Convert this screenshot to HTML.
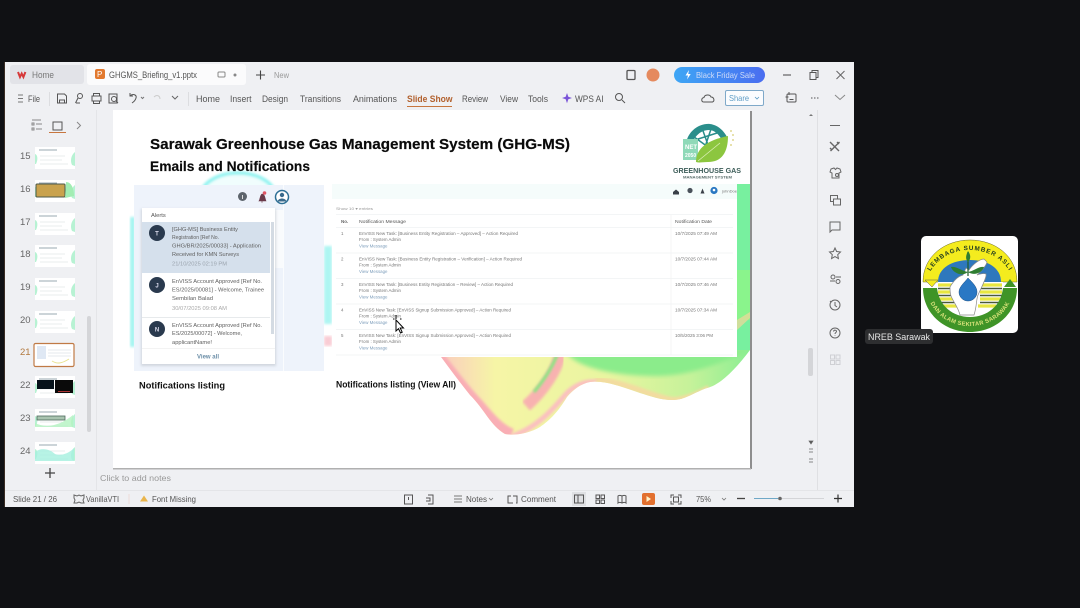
<!DOCTYPE html>
<html><head><meta charset="utf-8"><style>
html,body{margin:0;padding:0;background:#101114;width:1080px;height:608px;overflow:hidden}
svg{display:block}
#root{filter:blur(.35px)}
text{font-family:"Liberation Sans",sans-serif}
.ui{font-size:9px;fill:#555}
.tb{font-size:4.4px;fill:#777}
.ln{font-size:4.4px;fill:#7f9fbc}
.n{font-size:5.2px;fill:#5f5f5f}
.i{fill:none;stroke:#555;stroke-width:1}
.num{font-size:9.5px;fill:#666}
</style></head><body>
<svg id="root" width="1080" height="608" viewBox="0 0 1080 608" xmlns="http://www.w3.org/2000/svg">
<defs>
<filter id="b3"><feGaussianBlur stdDeviation="3"/></filter>
<filter id="b1"><feGaussianBlur stdDeviation="1.2"/></filter>
<filter id="b2"><feGaussianBlur stdDeviation="2"/></filter>
<linearGradient id="wave" x1="0" y1="0" x2="1" y2="0">
<stop offset="0" stop-color="#fbc4c4"/><stop offset=".2" stop-color="#f6f5a6"/><stop offset=".55" stop-color="#e9f5a0"/><stop offset=".8" stop-color="#c6f29a"/><stop offset="1" stop-color="#86ee92"/>
</linearGradient>
<linearGradient id="btn" x1="0" y1="0" x2="1" y2="0"><stop offset="0" stop-color="#3ea6f5"/><stop offset="1" stop-color="#4a6df0"/></linearGradient>
<path id="topArc" d="M926 288 A44 38 0 0 1 1014 288"/>
<path id="botArc" d="M927 288 A43 38 0 0 0 1013 288"/>
<clipPath id="waveClip"><path d="M436 350H750C735 370 720 385 707 388 695 392 685 400 673 400 660 400 650 396 640 393 625 388 605 380 590 382 580 384 573 390 567 397 558 412 550 420 540 427 530 433 515 436 505 434 490 425 485 410 470 395 458 380 447 365 436 350Z"/></clipPath>
<clipPath id="tile"><rect x="921" y="236" width="97" height="97" rx="5"/></clipPath>
<g id="th">
<rect width="40" height="22" fill="#fff"/>
<rect x="4" y="2.500" width="18" height="1" fill="#9aa8b0"/>
<path d="M0 7c3 1 3 6 1 10H0zM40 5c-4 3-5 9-3 13l3 1z" fill="#b7f2d3"/>
<path d="M5 9h25M5 13h22M5 17h28" stroke="#e1e6e9" stroke-width=".7"/>
</g>
</defs>

<rect width="1080" height="608" fill="#101114"/>
<rect x="4" y="62" width="1" height="445" fill="#3a2d24"/>
<rect x="5" y="62" width="849" height="445" fill="#eff0f3"/>

<!-- tabs -->
<rect x="10" y="65" width="74" height="19" rx="3" fill="#e2e3e8"/>
<rect x="87" y="64" width="159" height="21" rx="3" fill="#fbfbfc"/>
<path d="M18 72l2 5 1.700-3.500 1.700 3.500 2-5" fill="none" stroke="#d6393a" stroke-width="2"/>
<text x="32" y="78" class="ui" textLength="22" lengthAdjust="spacingAndGlyphs" style="fill:#777">Home</text>
<rect x="95" y="69" width="10" height="10" rx="2" fill="#e2792f"/>
<text x="97" y="77" font-size="8" fill="#fff">P</text>
<text x="109" y="78" class="ui" textLength="88" lengthAdjust="spacingAndGlyphs">GHGMS_Briefing_v1.pptx</text>
<rect x="218" y="72" width="7" height="5" rx="1" class="i" style="stroke:#888"/>
<circle cx="235" cy="75" r="1.500" fill="#888"/>
<path d="M256 75h9M260.500 70.500v9" stroke="#444" stroke-width="1.100"/>
<text x="274" y="78" font-size="8" fill="#999" textLength="15" lengthAdjust="spacingAndGlyphs">New</text>
<rect x="627" y="70.500" width="8" height="9" rx="1" class="i" style="stroke:#555;stroke-width:1.300"/>
<circle cx="653" cy="75" r="6.500" fill="#e58a5e"/>
<rect x="674" y="67" width="91" height="16" rx="8" fill="url(#btn)"/>
<path d="M689 70l-3.500 5.500h2.500l-1 4 3.700-5.500h-2.500z" fill="#fff"/>
<text x="696" y="78" font-size="8.500" fill="#cfdcf8" textLength="59" lengthAdjust="spacingAndGlyphs">Black Friday Sale</text>
<path d="M783 75h8" stroke="#444"/>
<rect x="810" y="72.500" width="6" height="7" class="i"/><path d="M812 72.500v-2h6v7h-2" class="i"/>
<path d="M836.500 71l8 8M844.500 71l-8 8" stroke="#666"/>

<!-- ribbon -->
<path d="M18 95h5M18 98.500h5M18 102h5" stroke="#777"/>
<text x="28" y="102" class="ui" textLength="12" lengthAdjust="spacingAndGlyphs">File</text>
<rect x="49" y="92" width="1" height="14" fill="#dcdde0"/>
<path d="M57.500 94h7l2 2v7h-9zM59.500 103v-3h5v3" class="i"/>
<circle cx="80" cy="96" r="2.500" class="i"/><path d="M78 98l-2.500 5M76 103h4" class="i"/>
<rect x="92" y="96" width="9" height="5" class="i"/><path d="M93.500 96v-2.500h6v2.500M93.500 101v2.500h6V101" class="i"/>
<rect x="109" y="94" width="8" height="9" class="i"/><circle cx="114" cy="99" r="2.500" class="i"/><path d="M116 101l2 2" class="i"/>
<path d="M130 96c3-3 7-1 6 2-.5 2-2.500 4-4 5M130 93v3h3" class="i"/>
<path d="M141 97l1.500 1.500 1.500-1.500" class="i" style="stroke:#777"/>
<path d="M154 97c3-3 6-1 6 2" class="i" style="stroke:#ccc"/>
<path d="M172 96l3 3 3-3" class="i" style="stroke:#666"/>
<rect x="188" y="92" width="1" height="14" fill="#dcdde0"/>
<g class="ui">
<text x="196" y="102" textLength="24" lengthAdjust="spacingAndGlyphs">Home</text>
<text x="230" y="102" textLength="21.500" lengthAdjust="spacingAndGlyphs">Insert</text>
<text x="262" y="102" textLength="26" lengthAdjust="spacingAndGlyphs">Design</text>
<text x="300" y="102" textLength="41" lengthAdjust="spacingAndGlyphs">Transitions</text>
<text x="353" y="102" textLength="44" lengthAdjust="spacingAndGlyphs">Animations</text>
<text x="462" y="102" textLength="26" lengthAdjust="spacingAndGlyphs">Review</text>
<text x="500" y="102" textLength="18" lengthAdjust="spacingAndGlyphs">View</text>
<text x="528" y="102" textLength="20" lengthAdjust="spacingAndGlyphs">Tools</text>
<text x="575" y="102" textLength="28.500" lengthAdjust="spacingAndGlyphs">WPS AI</text>
</g>
<text x="407" y="102" font-size="9" font-weight="bold" fill="#b2612e" textLength="45.500" lengthAdjust="spacingAndGlyphs">Slide Show</text>
<rect x="407" y="106" width="45" height="1" fill="#c7763e"/>
<path d="M567 93l1.300 3.700 3.700 1.300-3.700 1.300-1.300 4-1.300-4-3.700-1.300 3.700-1.300z" fill="#7a54d8"/>
<circle cx="619" cy="97" r="3.500" class="i"/><path d="M622 100l3 3" class="i"/>
<path d="M704 102c-3 0-3-4 0-4.500 .5-3 6-3.500 7-.5 3 0 4 4 1.500 5z" class="i"/>
<rect x="725.500" y="90.500" width="38" height="15" rx="1.500" fill="#fbfcfe" stroke="#7fa9c9"/>
<text x="729" y="101" font-size="8.500" fill="#5f9dc6" textLength="20" lengthAdjust="spacingAndGlyphs">Share</text>
<path d="M755 97l2 2 2-2" class="i" style="stroke:#5b9ac3;stroke-width:.8"/>
<rect x="787" y="94" width="9" height="8" rx="1" class="i"/><path d="M789 92v3M785.500 97h3M789.500 99.500h4" class="i"/>
<path d="M811 98h1.500M814 98h1.500M817 98h1.500" stroke="#555"/>
<path d="M835 95l5 4.500 5-4.500" class="i" style="stroke:#888"/>

<!-- left pane -->
<path d="M32 123h2v2h-2zM32 128h2v2h-2zM36 124h6M36 129h6M32 120h9" class="i" style="stroke:#888"/>
<rect x="53" y="122" width="9" height="8" class="i" style="stroke:#555"/>
<rect x="49" y="132" width="17" height="1" fill="#c7763e"/>
<path d="M77 122l3.500 3.500-3.500 3.500" class="i" style="stroke:#888"/>
<rect x="96" y="110" width="1" height="380" fill="#e4e5e8"/>

<g class="num">
<text x="20" y="159">15</text><text x="20" y="192">16</text><text x="20" y="225">17</text><text x="20" y="257">18</text><text x="20" y="290">19</text><text x="20" y="323">20</text>
<text x="20" y="355" style="fill:#b2793f">21</text>
<text x="20" y="388">22</text><text x="20" y="421">23</text><text x="20" y="454">24</text>
</g>
<g>
<use href="#th" x="35" y="147"/>
<use href="#th" x="35" y="180"/><rect x="36" y="184" width="29" height="13" rx="1" fill="#c9a24d" stroke="#4d5a4a"/><path d="M66 182c6 0 8 8 8 14l-9 2z" fill="#a2edb3"/>
<use href="#th" x="35" y="213"/>
<use href="#th" x="35" y="245"/>
<use href="#th" x="35" y="278"/>
<use href="#th" x="35" y="311"/>
<rect x="34" y="343.500" width="40" height="23" rx="1.500" fill="#fff" stroke="#c07a45" stroke-width="1.200"/>
<rect x="37" y="346" width="9" height="13" fill="#dfe8f4"/><path d="M48 350h23M48 353h23M48 356h23" stroke="#dde2e6" stroke-width=".8"/><path d="M52 361c5 3 9 3 17-2" stroke="#e8e28f" fill="none"/>
<use href="#th" x="35" y="376"/><rect x="37" y="380" width="17" height="9" fill="#06121a"/><rect x="55" y="380" width="18" height="13" fill="#0a0a0a"/><rect x="58" y="391" width="12" height="1" fill="#a33"/>
<use href="#th" x="35" y="409"/><rect x="37" y="416" width="28" height="4" fill="#a9c4b0" stroke="#4d6a5c" stroke-width=".8"/><path d="M35 423c12 6 26 2 38-8v12H35z" fill="#b3f2c0" opacity=".8"/>
<use href="#th" x="35" y="442"/><path d="M35 452c6-5 15-3 20 2 6 2 13 0 19-6v13H35z" fill="#a5f0de" opacity=".8"/>
</g>
<rect x="87" y="316" width="4" height="116" rx="2" fill="#d4d5d8"/>
<path d="M45 473h10M50 468v10" stroke="#444" stroke-width="1.300"/>

<!-- slide -->
<rect x="750" y="111" width="2" height="358" fill="#8e8e8e"/>
<rect x="113" y="468" width="638" height="1.500" fill="#b0b0b0"/>
<rect x="113" y="110" width="637" height="358" fill="#fff"/>

<!-- glow waves -->
<svg x="113" y="110" width="637" height="358" viewBox="113 110 637 358">
<ellipse cx="238" cy="196" rx="37" ry="23" fill="#f0fdfd" stroke="#8df3f0" stroke-width="3.500" filter="url(#b1)"/>
<rect x="130" y="217" width="5" height="130" fill="#a5f4f1" filter="url(#b1)"/>
<rect x="324" y="246" width="8" height="78" fill="#aef5f2" filter="url(#b1)"/>
<rect x="324" y="336" width="8" height="10" fill="#f9ccd4" filter="url(#b1)"/>
<rect x="737" y="184" width="13" height="166" fill="#78f09f"/>
<path d="M737 270h13v50h-13z" fill="#8ef587" opacity=".8"/>
<path d="M737 320l13-8v6l-13 12z" fill="#f3d59a" opacity=".7"/>
<g clip-path="url(#waveClip)">
<rect x="430" y="345" width="325" height="95" fill="url(#wave)"/>
<path d="M432 348c18 22 32 42 46 56 12 14 22 26 34 30" fill="none" stroke="#f9aeb5" stroke-width="11" filter="url(#b1)"/>
<path d="M560 352c-2 18-18 40-34 54" fill="none" stroke="#f8b2b0" stroke-width="12" filter="url(#b1)"/>
<path d="M558 352c-5 15-14 28-24 40" fill="none" stroke="#84e97f" stroke-width="3" filter="url(#b1)"/>
<path d="M566 352c10 16 50 24 90 24 30 0 60-10 94-26z" fill="#8bec8b" filter="url(#b2)"/>
<path d="M595 380c25 0 60 18 78 20 14 0 28-8 36-12" fill="none" stroke="#f3dba0" stroke-width="6" filter="url(#b1)"/>
<path d="M512 436c25-8 42-28 54-42 8-8 18-13 30-12" fill="none" stroke="#fbc0c0" stroke-width="5" filter="url(#b1)"/>
</g>
</svg>

<text x="150" y="149" font-size="15" font-weight="bold" fill="#0a0a0a" stroke="#0a0a0a" stroke-width=".2" textLength="420" lengthAdjust="spacingAndGlyphs">Sarawak Greenhouse Gas Management System (GHG-MS)</text>
<text x="150" y="171" font-size="13.500" font-weight="bold" fill="#0a0a0a" stroke="#0a0a0a" stroke-width=".15" textLength="160" lengthAdjust="spacingAndGlyphs">Emails and Notifications</text>

<!-- GHG logo -->
<g>
<path d="M686 148c-1-15 12-25 24-24 8 1 14 7 17 13l-5 3c-3-5-7-10-13-10-9 0-17 8-17 18z" fill="#2a8e8b"/>
<path d="M695 140l22-7M702 128l6 17M690 134l18 13M712 126l-8 24" stroke="#2a8e8b" stroke-width="1.500"/>
<rect x="683" y="139" width="15" height="21" fill="#8fd9b8"/>
<text x="685" y="149" font-size="6" font-weight="bold" fill="#fff">NET</text>
<text x="685" y="157" font-size="5" font-weight="bold" fill="#fff">2050</text>
<path d="M696 162c0-14 12-22 32-26 0 16-6 26-20 26-5 0-9 1-12 0z" fill="#8cc63f"/>
<path d="M698 161l22-18" stroke="#dcefb8" stroke-width=".8"/>
<circle cx="731" cy="131" r=".9" fill="#d6cb72"/><circle cx="733" cy="135" r=".9" fill="#d6cb72"/><circle cx="733" cy="140" r=".9" fill="#d6cb72"/><circle cx="731" cy="145" r=".9" fill="#d6cb72"/>
<text x="673" y="173" font-size="7" font-weight="bold" fill="#3c5c58" textLength="68" lengthAdjust="spacingAndGlyphs">GREENHOUSE GAS</text>
<text x="683" y="178.500" font-size="3.800" font-weight="bold" fill="#5b6f6c" textLength="49" lengthAdjust="spacingAndGlyphs">MANAGEMENT SYSTEM</text>
</g>

<!-- notifications panel -->
<rect x="134" y="185" width="190" height="186" fill="#eef3fb"/>
<rect x="275" y="210" width="8" height="58" fill="#f9fbfd"/>
<rect x="283" y="185" width="1" height="186" fill="#fff" opacity=".7"/>
<rect x="141" y="209" width="135" height="157" fill="#b8bec6" filter="url(#b1)" opacity=".55"/>
<rect x="142" y="208" width="133" height="156" fill="#fff"/>
<rect x="142" y="222" width="128" height="51" fill="#d5e0ec"/>
<rect x="271" y="222" width="3" height="112" fill="#d4dbe3"/>
<rect x="142" y="317" width="128" height=".7" fill="#dde0e3"/>
<rect x="142" y="348" width="133" height=".7" fill="#eee"/>
<circle cx="242.500" cy="196.500" r="4.500" fill="#5d646c"/><rect x="242" y="195" width="1" height="4" fill="#ddd"/>
<path d="M259 201c1-1 1-6 3-7 3 0 3 5 4 7zM261 202h2" fill="#6a3a4a" stroke="#6a3a4a" stroke-width=".6"/><circle cx="264.500" cy="193" r="1.800" fill="#e05565"/>
<circle cx="282" cy="197" r="6.500" fill="#fff" stroke="#2d6f95" stroke-width="1.500"/><circle cx="282" cy="195" r="2.200" fill="#3a6a8c"/><path d="M277.500 201.500c1-4 8-4 9 0z" fill="#3a6a8c"/>
<text x="151" y="217" font-size="5.800" fill="#555">Alerts</text>
<circle cx="157" cy="233" r="8" fill="#2a3a4e"/><text x="157" y="235.500" font-size="6" font-weight="bold" fill="#dde" text-anchor="middle">T</text>
<circle cx="157" cy="285" r="8" fill="#2a3a4e"/><text x="157" y="287.500" font-size="6" font-weight="bold" fill="#dde" text-anchor="middle">J</text>
<circle cx="157" cy="329" r="8" fill="#2a3a4e"/><text x="157" y="331.500" font-size="6" font-weight="bold" fill="#dde" text-anchor="middle">N</text>
<g class="n">
<text x="172" y="231" textLength="66" lengthAdjust="spacingAndGlyphs">[GHG-MS] Business Entity</text>
<text x="172" y="239" textLength="47" lengthAdjust="spacingAndGlyphs">Registration [Ref No.</text>
<text x="172" y="247.500" textLength="89" lengthAdjust="spacingAndGlyphs">GHG/BR/2025/00033] - Application</text>
<text x="172" y="256" textLength="67" lengthAdjust="spacingAndGlyphs">Received for KMN Surveys</text>
<text x="172" y="265.500" style="fill:#9aa3ad" textLength="55" lengthAdjust="spacingAndGlyphs">21/10/2025 02:19 PM</text>
<text x="172" y="283" textLength="90" lengthAdjust="spacingAndGlyphs">EnVISS Account Approved [Ref No.</text>
<text x="172" y="291.500" textLength="92" lengthAdjust="spacingAndGlyphs">ES/2025/00081] - Welcome, Trainee</text>
<text x="172" y="300" textLength="41" lengthAdjust="spacingAndGlyphs">Sembilan Balad</text>
<text x="172" y="310" style="fill:#aaa" textLength="55" lengthAdjust="spacingAndGlyphs">30/07/2025 09:08 AM</text>
<text x="172" y="327" textLength="90" lengthAdjust="spacingAndGlyphs">EnVISS Account Approved [Ref No.</text>
<text x="172" y="335" textLength="70" lengthAdjust="spacingAndGlyphs">ES/2025/00072] - Welcome,</text>
<text x="172" y="344" textLength="40" lengthAdjust="spacingAndGlyphs">applicantName!</text>
<text x="197" y="358.500" font-size="6" font-weight="bold" style="fill:#6c8fa8" textLength="22" lengthAdjust="spacingAndGlyphs">View all</text>
</g>
<text x="139" y="388.500" font-size="9" font-weight="bold" fill="#111" textLength="86" lengthAdjust="spacingAndGlyphs">Notifications listing</text>
<text x="336" y="387.500" font-size="9" font-weight="bold" fill="#111" textLength="120" lengthAdjust="spacingAndGlyphs">Notifications listing (View All)</text>

<!-- table panel -->
<rect x="332" y="184" width="405" height="173" fill="#fff"/>
<rect x="332" y="184" width="405" height="15" fill="#f5fcfb"/>
<path d="M673 192l3-2.500 3 2.500v2.500h-6z" fill="#3a4048"/>
<circle cx="690" cy="190.500" r="2.600" fill="#4a525a"/>
<path d="M700.500 193.500l2-5 2 5z" fill="#3a4048"/>
<circle cx="714" cy="190.500" r="3.600" fill="#2a78c2"/><circle cx="714" cy="190" r="1.300" fill="#fff"/>
<text x="722" y="192.500" font-size="4" fill="#777" textLength="15" lengthAdjust="spacingAndGlyphs">johnDoe</text>
<text x="336" y="210" font-size="3.800" fill="#999" textLength="37" lengthAdjust="spacingAndGlyphs">Show  10  ▾  entries</text>
<g stroke="#f0f2f3" stroke-width=".7">
<path d="M336 214.500H733M336 227.500H733M336 253H733M336 278.500H733M336 304H733M336 329.500H733M336 355H733"/>
<path d="M671 215V355"/>
</g>
<g>
<text x="341" y="223" font-size="4.500" font-weight="bold" fill="#666">No.</text>
<text x="359" y="223" font-size="4.500" fill="#555" textLength="47" lengthAdjust="spacingAndGlyphs">Notification Message</text>
<text x="675" y="223" font-size="4.500" fill="#555" textLength="37" lengthAdjust="spacingAndGlyphs">Notification Date</text>
<g class="tb">
<text x="341" y="235">1</text><text x="341" y="260.500">2</text><text x="341" y="286">3</text><text x="341" y="311.500">4</text><text x="341" y="337">5</text>
<text x="359" y="235" textLength="159" lengthAdjust="spacingAndGlyphs">EnVISS New Task: [Business Entity Registration – Approved] – Action Required</text>
<text x="359" y="241">From : System Admin</text>
<text x="359" y="260.500" textLength="163" lengthAdjust="spacingAndGlyphs">EnVISS New Task: [Business Entity Registration – Verification] – Action Required</text>
<text x="359" y="266.500">From : System Admin</text>
<text x="359" y="286" textLength="154" lengthAdjust="spacingAndGlyphs">EnVISS New Task: [Business Entity Registration – Review] – Action Required</text>
<text x="359" y="292">From : System Admin</text>
<text x="359" y="311.500" textLength="152" lengthAdjust="spacingAndGlyphs">EnVISS New Task: [EnVISS Signup Submission Approved] – Action Required</text>
<text x="359" y="317.500">From : System Admin</text>
<text x="359" y="337" textLength="152" lengthAdjust="spacingAndGlyphs">EnVISS New Task: [EnVISS Signup Submission Approved] – Action Required</text>
<text x="359" y="343">From : System Admin</text>
<text x="675" y="235" textLength="42" lengthAdjust="spacingAndGlyphs">10/7/2025 07:49 AM</text>
<text x="675" y="260.500" textLength="42" lengthAdjust="spacingAndGlyphs">10/7/2025 07:44 AM</text>
<text x="675" y="286" textLength="42" lengthAdjust="spacingAndGlyphs">10/7/2025 07:46 AM</text>
<text x="675" y="311.500" textLength="42" lengthAdjust="spacingAndGlyphs">10/7/2025 07:34 AM</text>
<text x="675" y="337" textLength="38" lengthAdjust="spacingAndGlyphs">10/5/2025 3:06 PM</text>
</g>
<g class="ln">
<text x="359" y="247.500">View Message</text><text x="359" y="273">View Message</text><text x="359" y="298.500">View Message</text><text x="359" y="324">View Message</text><text x="359" y="349.500">View Message</text>
</g>
</g>
<!-- cursor -->
<path d="M396 320l0 11 2.500-2.300 2 4.300 1.700-.8-2-4.200h3.300z" fill="#fff" stroke="#000" stroke-width="1"/>
<path d="M396 315v4M393 319h1.500M400 319h1.500" stroke="#000" stroke-width="1"/>

<!-- scrollbar + right rail -->
<rect x="817" y="110" width="1" height="381" fill="#dfe0e3"/>
<path d="M811 114l-2 2h4z" fill="#777"/>
<rect x="808" y="348" width="5" height="28" rx="2" fill="#d4d5d8"/>
<path d="M809 441h4l-2 3zM809 449h4M809 452h4M809 459h4M809 462h4" fill="#555" stroke="#666" stroke-width=".7"/>
<g class="i" style="stroke:#666">
<path d="M830 125.500h10" />
<path d="M830 142l9 9M839.500 142l-9 9M830 148l2 2M837 142l2 2" stroke-width="1.400"/>
<path d="M831 169l3-1 1.500 1.500L837 168l3 1 1 3-2 1v5h-7v-5l-2-1z"/><circle cx="837" cy="175" r="1.500"/>
<rect x="830.500" y="195.500" width="7" height="6"/><rect x="833.500" y="199" width="7" height="6" fill="#eff0f3"/>
<path d="M830 222h10v8h-8l-2 2z"/>
<path d="M835 248l1.600 3.500 3.900.5-2.800 2.700.7 3.800-3.400-1.900-3.400 1.900.7-3.800-2.800-2.700 3.900-.5z"/>
<path d="M836 277h5M830 281h5"/><circle cx="833" cy="277" r="2"/><circle cx="838" cy="281.500" r="2"/>
<circle cx="835" cy="305" r="5"/><path d="M835 302v3.500l2 1.500M830 301l1 1"/>
<circle cx="835" cy="333" r="5"/><path d="M833.500 331.500c.5-2 3-1.500 3 0 0 1-1.500 1-1.500 2.500M835 335.500v.5"/>
</g>
<g class="i" style="stroke:#cfd0d4"><rect x="830.500" y="355" width="4" height="4"/><rect x="836" y="355" width="4" height="4"/><rect x="830.500" y="360.500" width="4" height="4"/><rect x="836" y="360.500" width="4" height="4"/></g>

<!-- notes -->
<text x="100" y="481" font-size="8.500" fill="#999" textLength="71" lengthAdjust="spacingAndGlyphs">Click to add notes</text>
<rect x="5" y="490" width="849" height="1" fill="#e4e5e8"/>

<!-- status bar -->
<g class="ui" style="font-size:8.500px">
<text x="13" y="502" textLength="44" lengthAdjust="spacingAndGlyphs">Slide 21 / 26</text>
<text x="86" y="502" textLength="33" lengthAdjust="spacingAndGlyphs">VanillaVTI</text>
<text x="152" y="502" textLength="44" lengthAdjust="spacingAndGlyphs">Font Missing</text>
<text x="466" y="502" textLength="21" lengthAdjust="spacingAndGlyphs">Notes</text>
<text x="521" y="502" textLength="35" lengthAdjust="spacingAndGlyphs">Comment</text>
<text x="696" y="502" textLength="15" lengthAdjust="spacingAndGlyphs">75%</text>
</g>
<path d="M74 495l3 1 2-1 2 1 3-1v3l-1 2 1 3h-3l-2-1-2 1h-3l1-3-1-2z" class="i" style="stroke:#666"/>
<path d="M144 495.500l-4 6h8z" fill="#e9b54c"/>
<rect x="128.500" y="494" width="1" height="10" fill="#eedcd8"/>
<rect x="404.500" y="495" width="8" height="9" class="i"/><path d="M408.500 497v3" stroke="#555"/>
<path d="M428 495h5v9h-5M426 498h4v3h-4" class="i"/>
<path d="M454 496h8M454 499h8M454 502h8" class="i" style="stroke:#777"/>
<path d="M489 498l2 2 2-2" class="i" style="stroke:#777;stroke-width:.8"/>
<path d="M513 503h-5v-7h3M513 496h4v7h-1" class="i"/>
<rect x="572" y="492" width="14" height="14" fill="#dfe0e3"/>
<rect x="574.500" y="495" width="9" height="8" class="i"/><path d="M578 495v8" class="i"/>
<rect x="596" y="495" width="3.500" height="3.500" class="i"/><rect x="601" y="495" width="3.500" height="3.500" class="i"/><rect x="596" y="500" width="3.500" height="3.500" class="i"/><rect x="601" y="500" width="3.500" height="3.500" class="i"/>
<path d="M622 496c-2-1-3-1-4 0v7c1-1 2-1 4 0 2-1 3-1 4 0v-7c-1-1-2-1-4 0zv7" class="i"/>
<rect x="642" y="493" width="13" height="12" rx="2" fill="#e2702f"/><path d="M646.500 496l4.500 3-4.500 3z" fill="#fff3c9"/>
<path d="M671 498v-3h3M678 495h3v3M681 501v3h-3M674 504h-3v-3" class="i"/><rect x="673.500" y="497" width="5" height="5" class="i"/>
<path d="M722 498l2 2 2-2" class="i" style="stroke:#777;stroke-width:.8"/>
<path d="M737 498.500h8" stroke="#444" stroke-width="1.300"/>
<rect x="754" y="498" width="24" height="1" fill="#6fa8c7"/><rect x="778" y="498" width="46" height="1" fill="#d4d5d8"/>
<circle cx="780" cy="498.500" r="1.800" fill="#666"/>
<path d="M834 498.500h8M838 494.500v8" stroke="#333" stroke-width="1.200"/>

<!-- participant tile -->
<rect x="921" y="236" width="97" height="97" rx="5" fill="#fff"/>
<g clip-path="url(#tile)">
<!-- yellow arch -->
<path d="M923 282C923 256 945 240 970 240S1017 256 1017 282Z" fill="#f4ec1e" stroke="#6a6a2a" stroke-width=".5"/>
<!-- blue inner arch -->
<path d="M938 282C938 268 952 260 970 260S1001 268 1001 282Z" fill="#2e78bd"/>
<!-- stripes -->
<rect x="938" y="282" width="65" height="30" fill="#fff"/>
<path d="M938 285h26M938 292h26M938 299h26M942 306h24" stroke="#e8e640" stroke-width="3.200"/>
<path d="M938 288.500h26M938 295.500h26M939 302.500h26" stroke="#4a5a3a" stroke-width="1.600"/>
<path d="M980 285h22M980 292h22M980 299h20M978 306h18" stroke="#e8e640" stroke-width="3.200"/>
<path d="M980 288.500h22M980 295.500h22M980 302.500h19" stroke="#4a5a3a" stroke-width="1.600"/>
<!-- green bottom band -->
<path d="M923 288C923 314 945 332 970 332S1017 314 1017 288H1003C1001 306 987 317 970 317S939 306 937 288Z" fill="#3f9427"/>
<!-- corner triangles -->
<path d="M925 280l7 7 6-7z" fill="#f4ec1e" stroke="#555" stroke-width=".5"/>
<path d="M1004 287l6-8 6 8z" fill="#3f9427"/>
<!-- hand -->
<path d="M950 287c4-7 9-11 13-12l3-7 3 2c4-6 11-11 15-11l3 3c-1 5-7 10-10 13 3-1 7-2 9-1 1 3-4 12-8 21-2 5-1 11-4 20h-14c-2-8-6-12-9-19-1-3-1-7-1-9z" fill="#fff" stroke="#8a8a8a" stroke-width=".7"/>
<path d="M968 278c5 5 9 9 9 14a9 9 0 0 1-18 0c0-5 5-9 9-14z" fill="#2a78c4" stroke="#1d4f80" stroke-width=".5"/>
<!-- plant -->
<path d="M968 276V252" stroke="#1f5b2a" stroke-width="1.200"/>
<path d="M968 272c-6-1-12-6-17-5 2 6 11 10 17 5zM968 272c6-1 11-6 16-5-2 6-10 9-16 5zM968 262c-3-3-2-7 0-11 3 4 3 8 0 11z" fill="#2f7d32"/>
<text font-size="6.300" font-weight="bold" fill="#1f3a1f" letter-spacing=".9"><textPath href="#topArc" startOffset="50%" text-anchor="middle">LEMBAGA SUMBER ASLI</textPath></text>
<text font-size="5.800" font-weight="bold" fill="#d9e27a" letter-spacing=".3"><textPath href="#botArc" startOffset="50%" text-anchor="middle">DAN ALAM SEKITAR SARAWAK</textPath></text>
</g>
<rect x="865" y="329" width="68" height="15" rx="3" fill="#2d2e30"/>
<text x="868" y="340" font-size="9.500" fill="#e6e6e6" textLength="62" lengthAdjust="spacingAndGlyphs">NREB Sarawak</text>
</svg>
</body></html>
